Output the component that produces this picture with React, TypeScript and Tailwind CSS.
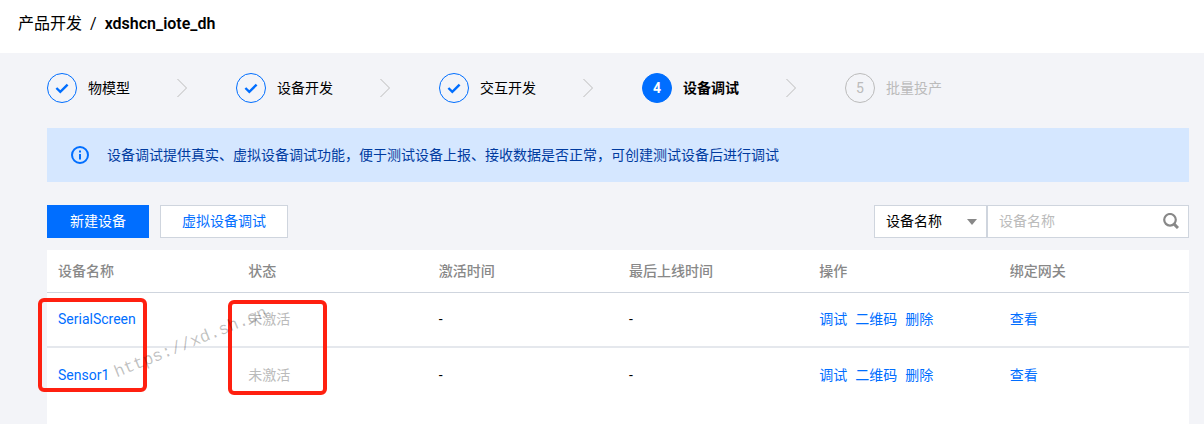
import clsx from 'clsx';

type StepStatus = 'done' | 'current' | 'pending';

interface Step {
    label: string;
    status: StepStatus;
}

interface Device {
    name: string;
    status: string;
    activatedAt: string;
    lastOnlineAt: string;
}

const steps: Step[] = [
    { label: '物模型', status: 'done' },
    { label: '设备开发', status: 'done' },
    { label: '交互开发', status: 'done' },
    { label: '设备调试', status: 'current' },
    { label: '批量投产', status: 'pending' },
];

const columns = [
    '设备名称',
    '状态',
    '激活时间',
    '最后上线时间',
    '操作',
    '绑定网关',
];

const devices: Device[] = [
    {
        name: 'SerialScreen',
        status: '未激活',
        activatedAt: '-',
        lastOnlineAt: '-',
    },
    { name: 'Sensor1', status: '未激活', activatedAt: '-', lastOnlineAt: '-' },
];

const actions = ['调试', '二维码', '删除'];

const StepItem: React.FC<{ step: Step; index: number }> = ({ step, index }) => (
    <div className="flex items-center gap-[11px]">
        <span
            className={clsx(
                'flex size-[30px] items-center justify-center rounded-full border',
                step.status === 'done' && 'border-[#006eff] text-[#006eff]',
                step.status === 'current' &&
                    'border-[#006eff] bg-[#006eff] font-bold text-white',
                step.status === 'pending' && 'border-[#bbb] text-[#bbb]',
            )}
        >
            {step.status === 'done' ? (
                <svg
                    className="size-4"
                    viewBox="0 0 16 16"
                    fill="none"
                    stroke="currentColor"
                    strokeWidth="2.4"
                >
                    <path d="M2.4 8 6.3 11.8 13.6 4.6" />
                </svg>
            ) : (
                index + 1
            )}
        </span>
        <span
            className={clsx(
                step.status === 'current' && 'font-bold',
                step.status === 'pending' && 'text-[#bbb]',
            )}
        >
            {step.label}
        </span>
    </div>
);

const Steps = () => (
    <ol className="flex items-center">
        {steps.map((step, index) => (
            <li key={step.label} className="flex items-center">
                <StepItem step={step} index={index} />
                {index < steps.length - 1 && (
                    <svg
                        className="mr-[49px] ml-[47px] h-5 w-2.5"
                        viewBox="0 0 10 20"
                        fill="none"
                        stroke="#bbb"
                    >
                        <path d="M0.5 1 9.5 10 0.5 19" />
                    </svg>
                )}
            </li>
        ))}
    </ol>
);

const Toolbar = () => (
    <div className="flex items-center justify-between">
        <div className="flex gap-[11px]">
            <button
                type="button"
                className="h-[33px] bg-[#006eff] px-[23px] pb-0.5 text-white"
            >
                新建设备
            </button>
            <button
                type="button"
                className="h-[33px] border border-[#cfd5de] bg-white px-[21px] pb-0.5 text-[#006eff]"
            >
                虚拟设备调试
            </button>
        </div>

        <div className="flex">
            <div className="relative">
                <select
                    aria-label="搜索字段"
                    className="h-[33px] w-[113px] appearance-none border border-[#cfd5de] bg-white pb-0.5 pl-[11px]"
                >
                    <option>设备名称</option>
                </select>
                <svg
                    className="pointer-events-none absolute top-3.5 right-2.5 h-1.5 w-2.5"
                    viewBox="0 0 10 6"
                    fill="#888"
                >
                    <path d="M0 0h10L5 6z" />
                </svg>
            </div>
            <div className="relative">
                <input
                    type="text"
                    aria-label="搜索"
                    placeholder="设备名称"
                    className="h-[33px] w-[202px] border border-[#cfd5de] bg-white pr-9 pb-0.5 pl-[11px] placeholder:text-[#bbb]"
                />
                <button
                    type="button"
                    aria-label="查询"
                    className="absolute top-2 right-2.5"
                >
                    <svg
                        className="size-4"
                        viewBox="0 0 16 16"
                        fill="none"
                        stroke="#888"
                    >
                        <circle cx="7" cy="6.8" r="5.8" strokeWidth="2.2" />
                        <path d="M10.4 10.4 15 15" strokeWidth="3" />
                    </svg>
                </button>
            </div>
        </div>
    </div>
);

const DeviceTable = () => (
    <table className="w-full table-fixed border-collapse">
        <thead>
            <tr className="h-[42px] border-b border-[#cfd5de]">
                {columns.map((column) => (
                    <th
                        key={column}
                        className="px-[11px] text-left font-medium text-[#888]"
                    >
                        {column}
                    </th>
                ))}
            </tr>
        </thead>
        <tbody>
            {devices.map((device) => (
                <tr
                    key={device.name}
                    className="h-[55px] border-b-2 border-[#e5e8ed] last:border-0"
                >
                    <td className="px-[11px]">
                        <a href="#" className="text-[#006eff]">
                            {device.name}
                        </a>
                    </td>
                    <td className="px-[11px] text-[#bbb]">{device.status}</td>
                    <td className="px-[11px]">{device.activatedAt}</td>
                    <td className="px-[11px]">{device.lastOnlineAt}</td>
                    <td className="px-[11px]">
                        <div className="flex gap-2">
                            {actions.map((action) => (
                                <a
                                    key={action}
                                    href="#"
                                    className="text-[#006eff]"
                                >
                                    {action}
                                </a>
                            ))}
                        </div>
                    </td>
                    <td className="px-[11px]">
                        <a href="#" className="text-[#006eff]">
                            查看
                        </a>
                    </td>
                </tr>
            ))}
        </tbody>
    </table>
);

export default function App() {
    return (
        <div className="flex min-h-screen flex-col bg-[#f3f4f8] font-[Roboto,'Noto_Sans_CJK_SC',sans-serif] text-sm leading-5 text-black">
            <header className="flex h-[53px] items-center gap-2 bg-white px-[18px] pb-1.5 text-base leading-6">
                <a href="#">产品开发</a>
                <span>/</span>
                <h1 className="font-semibold">xdshcn_iote_dh</h1>
            </header>

            <main className="flex flex-1 flex-col pt-5 pr-[15px] pl-[47px]">
                <Steps />

                {/* 提示信息 */}
                <div className="mt-[25px] flex h-[54px] items-center gap-[18px] bg-[#d5e7ff] px-6 text-[#003b9f]">
                    <svg
                        className="size-[18px] shrink-0"
                        viewBox="0 0 18 18"
                        fill="none"
                        stroke="#006eff"
                        strokeWidth="2"
                    >
                        <circle cx="9" cy="9" r="8" />
                        <path d="M9 4.5v2M9 8v5.5" />
                    </svg>
                    <p>
                        设备调试提供真实、虚拟设备调试功能，便于测试设备上报、接收数据是否正常，可创建测试设备后进行调试
                    </p>
                </div>

                <div className="mt-[23px]">
                    <Toolbar />
                </div>

                <section className="relative mt-3 flex-1 bg-white">
                    <DeviceTable />

                    {/* 标注框与水印 */}
                    <div className="pointer-events-none absolute top-12 -left-[9px] h-[94px] w-[109px] rounded-md border-4 border-[#ff2010]" />
                    <div className="pointer-events-none absolute top-[50px] left-[181px] h-[95px] w-[99px] rounded-md border-4 border-[#ff2010]" />
                    <span className="pointer-events-none absolute top-[113px] left-[72px] origin-bottom-left -rotate-22 font-['Liberation_Mono',monospace] text-[17px] leading-5 whitespace-nowrap text-black/25">
                        https://xd.sh.cn
                    </span>
                </section>
            </main>
        </div>
    );
}
